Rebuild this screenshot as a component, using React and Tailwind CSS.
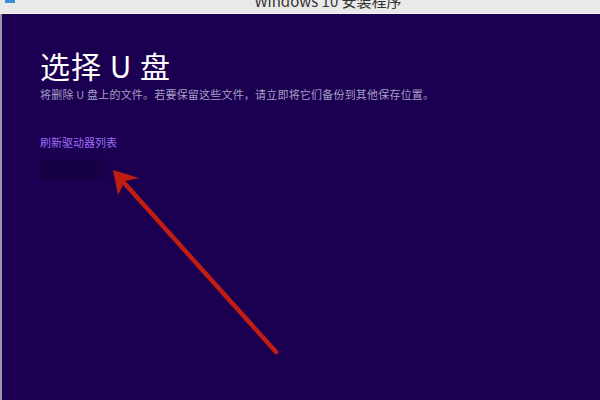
import React from 'react';

export default function App() {
  return (
    <div
      className="relative w-[600px] h-[400px] overflow-hidden bg-[#1b0052] flex flex-col"
      style={{ fontFamily: '"Noto Sans CJK SC", "Noto Sans", sans-serif' }}
    >
      {/* Title bar */}
      <div className="relative h-[14px] shrink-0 bg-[#e9e9e9] border-b border-[#f4f4f4] flex items-end justify-center pl-[56px] overflow-hidden">
        <div className="absolute left-[5px] top-0 w-[10px] h-[3px] bg-[#3b8fd9]" />
        <span className="text-[15px] leading-[15px] pb-[5px] text-[#333]">Windows 10 安装程序</span>
      </div>

      {/* Body */}
      <div className="flex-1 border-l-2 border-[#9a9aa6] pl-[38px] pt-[33px] text-white">
        <h1 className="text-[30px] leading-[36px] font-normal tracking-[1px]">选择 U 盘</h1>
        <p className="mt-[3px] text-[11px] leading-[16px] tracking-[0.2px] text-[#a79fc6]">
          将删除 U 盘上的文件。若要保留这些文件，请立即将它们备份到其他保存位置。
        </p>
        <div className="mt-[32px] text-[11px] leading-[16px] text-[#9c6ef2]">刷新驱动器列表</div>
        <div className="mt-[9px] flex h-[21px]">
          <div className="w-[52px] bg-[#150044]" />
          <div className="w-[14px] bg-[#170047]" />
        </div>
      </div>

      {/* Annotation arrow */}
      <svg className="absolute left-0 top-0 pointer-events-none" width="600" height="400">
        <line x1="276" y1="352" x2="118" y2="176" stroke="#c11d10" strokeWidth="4.5" strokeLinecap="round" />
        <polygon points="113,170 139,178 125,181 118,195" fill="#c11d10" />
      </svg>
    </div>
  );
}
